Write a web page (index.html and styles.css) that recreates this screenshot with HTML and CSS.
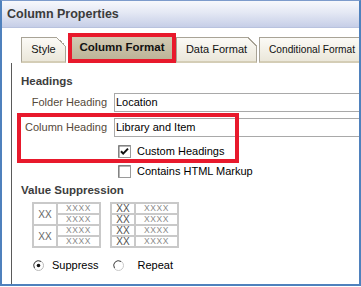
FILE: index.html
```html
<!DOCTYPE html>
<html lang="en">
<head>
    <meta charset="UTF-8">
    <title>Column Properties</title>
    <link rel="stylesheet" href="styles.css">
</head>
<body>

<div class="window">
    <div class="titlebar">Column Properties</div>

    <div class="tabs">
        <div class="tab tab-style">Style</div>
        <div class="tab-mark">
            <div class="tab tab-active">Column Format</div>
        </div>
        <div class="tab tab-data">Data Format</div>
        <div class="tab tab-cond">Conditional Format</div>
    </div>

    <div class="panel">
        <div class="section-title">Headings</div>

        <div class="field">
            <label class="field-label">Folder Heading</label>
            <div class="field-input">Location</div>
        </div>
        <div class="field field-second">
            <label class="field-label">Column Heading</label>
            <div class="field-input">Library and Item</div>
        </div>

        <div class="check check-first">
            <svg class="box" width="13" height="13" viewBox="0 0 13 13">
                <rect x="0.5" y="0.5" width="12" height="12" fill="#fff" stroke="#9a9a9a"/>
                <path d="M1 12V1H12" fill="none" stroke="#6d6d6d"/>
                <path d="M3 6.2L5.2 8.6L10 3.6" fill="none" stroke="#111" stroke-width="2"/>
            </svg>
            <span>Custom Headings</span>
        </div>
        <div class="check">
            <svg class="box" width="13" height="13" viewBox="0 0 13 13">
                <rect x="0.5" y="0.5" width="12" height="12" fill="#fff" stroke="#9a9a9a"/>
                <path d="M1 12V1H12" fill="none" stroke="#6d6d6d"/>
            </svg>
            <span>Contains HTML Markup</span>
        </div>

        <div class="section-title section-value">Value Suppression</div>

        <div class="samples">
            <table class="sample">
                <tr><td class="key" rowspan="2">XX</td><td class="val">XXXX</td></tr>
                <tr><td class="val">XXXX</td></tr>
                <tr><td class="key" rowspan="2">XX</td><td class="val">XXXX</td></tr>
                <tr><td class="val">XXXX</td></tr>
            </table>
            <table class="sample sample-repeat">
                <tr><td class="key">XX</td><td class="val">XXXX</td></tr>
                <tr><td class="key">XX</td><td class="val">XXXX</td></tr>
                <tr><td class="key">XX</td><td class="val">XXXX</td></tr>
                <tr><td class="key">XX</td><td class="val">XXXX</td></tr>
            </table>
        </div>

        <div class="radios">
            <svg class="radio" width="11" height="11" viewBox="0 0 11 11">
                <circle cx="5.5" cy="5.5" r="5" fill="#fff" stroke="#b8b8b8"/>
                <path d="M1.6 8A4.6 4.6 0 0 1 8 1.6" fill="none" stroke="#555"/>
                <circle cx="5.5" cy="5.5" r="1.8" fill="#111"/>
            </svg>
            <span class="radio-text">Suppress</span>
            <svg class="radio radio-second" width="11" height="11" viewBox="0 0 11 11">
                <circle cx="5.5" cy="5.5" r="5" fill="#fff" stroke="#c8c8c8"/>
                <path d="M1.6 8A4.6 4.6 0 0 1 8 1.6" fill="none" stroke="#555"/>
            </svg>
            <span class="radio-text radio-text-second">Repeat</span>
        </div>

        <!-- red annotation over the column heading -->
        <div class="mark"></div>
    </div>
</div>

</body>
</html>
```

FILE: styles.css
```css
body {
    margin: 0;
    font-family: "Liberation Sans", Arial, sans-serif;
    font-size: 11px;
    color: #000;
    background: #fff;
}

.window {
    width: 361px;
    height: 286px;
    box-sizing: border-box;
    border: 2px solid #4f81bd;
    border-top: 1px solid #7d9bcb;
    overflow: hidden;
    display: flex;
    flex-direction: column;
}

.titlebar {
    height: 27px;
    flex: none;
    box-sizing: border-box;
    padding-left: 5px;
    line-height: 26px;
    font-size: 12.5px;
    font-weight: bold;
    color: #3b3b3b;
    background: linear-gradient(#f7f8fc, #e4e8f4 45%, #c6cee7);
    border-bottom: 1px solid #b8c2de;
}

/* tab strip */
.tabs {
    height: 35px;
    flex: none;
    display: flex;
    align-items: flex-end;
    padding-left: 19px;
}

.tab {
    position: relative;
    box-sizing: border-box;
    height: 26px;
    line-height: 23px;
    text-align: center;
    font-size: 11px;
    color: #111;
    border: 1px solid #a8a396;
    border-bottom: 2px solid #d4cdb6;
    background: linear-gradient(#fbfaf6, #ebe7da);
    flex: none;
}

.tab::after {
    content: "";
    position: absolute;
    top: -1px;
    right: -1px;
    width: 9px;
    height: 9px;
    background: linear-gradient(to bottom left, #fff 50%, #a8a396 50%, #a8a396 calc(50% + 1px), transparent calc(50% + 1px));
}

.tab-style { width: 45px; margin-right: 2px; }
.tab-data { width: 81px; margin-right: 2px; }

.tab-cond {
    width: 120px;
    text-align: left;
    padding-left: 9px;
    font-size: 10.2px;
}

.tab-mark {
    width: 108px;
    height: 30px;
    box-sizing: border-box;
    border: 4px solid #e8192c;
    flex: none;
}

.tab-active {
    width: 100px;
    height: 22px;
    line-height: 21px;
    border: none;
    font-size: 11.5px;
    font-weight: bold;
    background: linear-gradient(#d2cab3, #bdb498);
}

.tab-active::after {
    display: none;
}

/* panel */
.panel {
    position: relative;
    flex: 1;
    margin-left: 9px;
    border-left: 1px solid #5a5a5a;
    padding: 11px 0 0 9px;
    overflow: hidden;
}

.section-title {
    height: 14px;
    line-height: 14px;
    font-weight: bold;
    font-size: 11.5px;
    color: #3d3d3d;
}

.section-value {
    margin-top: 4px;
}

.field {
    display: flex;
    margin-top: 5px;
    height: 19px;
}

.field-second {
    margin-top: 6px;
}

.field-label {
    width: 86px;
    margin-right: 7px;
    text-align: right;
    line-height: 19px;
    color: #55493a;
}

.field-input {
    flex: 1;
    box-sizing: border-box;
    border: 1px solid #a9a9a9;
    border-right: none;
    padding-left: 1px;
    line-height: 17px;
}

.check {
    display: flex;
    align-items: center;
    height: 16px;
    margin-top: 4px;
    padding-left: 97px;
}

.check-first {
    margin-top: 6px;
}

.check .box {
    margin-right: 6px;
}

/* sample tables */
.samples {
    display: flex;
    margin: 5px 0 0 11px;
}

.sample {
    border-collapse: collapse;
    margin-right: 9px;
    border: 2px solid #c3c3c3;
    color: #707070;
}

.sample td {
    border: 2px solid #c9c9c9;
    padding: 0;
    text-align: center;
    height: 9px;
    line-height: 9px;
}

.sample .key {
    width: 22px;
    font-size: 10px;
    color: #666;
}

.sample-repeat .key {
    color: #505050;
}

.sample .val {
    width: 41px;
    font-size: 8.5px;
    letter-spacing: 0.6px;
    color: #8a8a8a;
}

.radios {
    display: flex;
    align-items: center;
    height: 16px;
    margin: 9px 0 0 12px;
}

.radio-text {
    margin-left: 8px;
}

.radio-second {
    margin-left: 15px;
}

.radio-text-second {
    margin-left: 13px;
}

.mark {
    position: absolute;
    left: 5px;
    top: 50px;
    width: 222px;
    height: 50px;
    box-sizing: border-box;
    border: 4px solid #e8192c;
}
```
